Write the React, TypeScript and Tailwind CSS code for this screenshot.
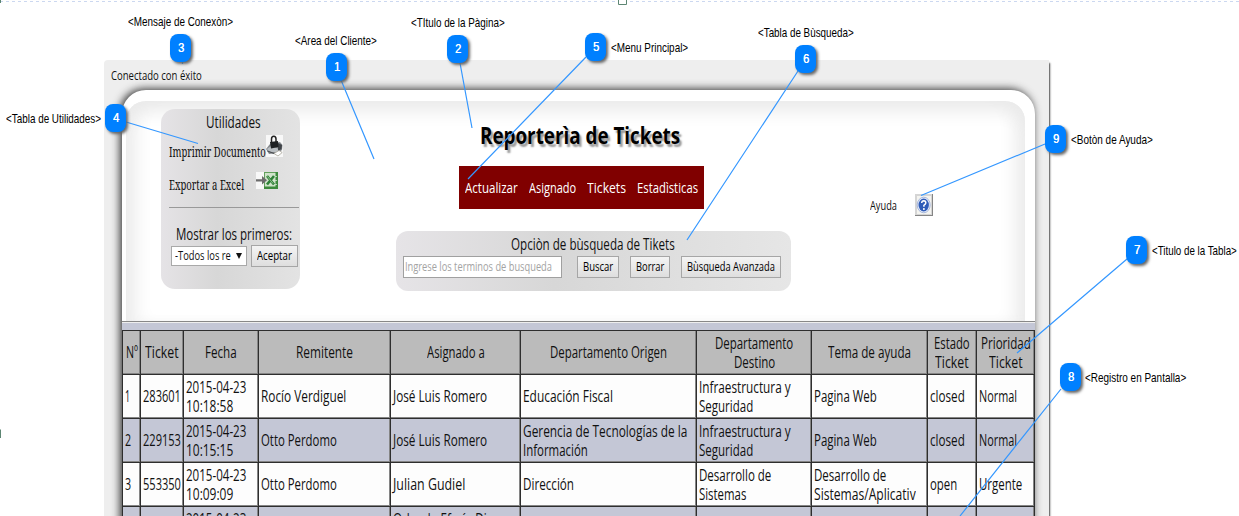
import { useLayoutEffect, useRef } from "react";

/* Single line of text condensed horizontally to a given width. */
function Fit({ w, children, className = "" }: { w: number; children: string; className?: string }) {
  const ref = useRef<HTMLSpanElement>(null);
  useLayoutEffect(() => {
    const el = ref.current;
    if (el) el.style.transform = `scaleX(${w / el.offsetWidth})`;
  }, [w, children]);
  return (
    <span className={"block shrink-0 whitespace-nowrap " + className} style={{ width: w }}>
      <span ref={ref} className="inline-block origin-left">{children}</span>
    </span>
  );
}

type Line = [string, number];

const badges: [number, string][] = [
  [1, "left-[326px] top-[53px]"],
  [2, "left-[447px] top-[35px]"],
  [3, "left-[170px] top-[34px]"],
  [4, "left-[105px] top-[104px]"],
  [5, "left-[585px] top-[33px]"],
  [6, "left-[795px] top-[45px]"],
  [7, "left-[1126px] top-[236px]"],
  [8, "left-[1060px] top-[363px]"],
  [9, "left-[1045px] top-[125px]"],
];

const labels: [string, number, string][] = [
  ["<Mensaje de Conexòn>", 105, "left-[128px] top-[13px]"],
  ["<Area del Cliente>", 82, "left-[295px] top-[32px]"],
  ["<TItulo de la Pàgina>", 94, "left-[411px] top-[14px]"],
  ["<Menu Principal>", 77, "left-[611px] top-[39px]"],
  ["<Tabla de Bùsqueda>", 96, "left-[758px] top-[24px]"],
  ["<Tabla de Utilidades>", 95, "left-[6px] top-[110px]"],
  ["<Botòn de Ayuda>", 82, "left-[1071px] top-[131px]"],
  ["<Titulo de la Tabla>", 85, "left-[1152px] top-[242px]"],
  ["<Registro en Pantalla>", 101, "left-[1085px] top-[369px]"],
];

const head: Line[][] = [
  [["Nº", 12]],
  [["Ticket", 34]],
  [["Fecha", 32]],
  [["Remitente", 57]],
  [["Asignado a", 58]],
  [["Departamento Origen", 117]],
  [["Departamento", 78], ["Destino", 41]],
  [["Tema de ayuda", 83]],
  [["Estado", 36], ["Ticket", 34]],
  [["Prioridad", 50], ["Ticket", 34]],
];

const infra: Line[] = [["Infraestructura y", 92], ["Seguridad", 54]];

const rows: Line[][][] = [
  [
    [["1", 5]], [["283601", 38]], [["2015-04-23", 60], ["10:18:58", 47]], [["Rocío Verdiguel", 85]],
    [["José Luis Romero", 94]], [["Educación Fiscal", 90]], infra, [["Pagina Web", 63]],
    [["closed", 35]], [["Normal", 38]],
  ],
  [
    [["2", 6]], [["229153", 38]], [["2015-04-23", 60], ["10:15:15", 47]], [["Otto Perdomo", 76]],
    [["José Luis Romero", 94]], [["Gerencia de Tecnologías de la", 164], ["Información", 65]], infra,
    [["Pagina Web", 63]], [["closed", 35]], [["Normal", 38]],
  ],
  [
    [["3", 6]], [["553350", 38]], [["2015-04-23", 60], ["10:09:09", 47]], [["Otto Perdomo", 76]],
    [["Julian Gudiel", 72]], [["Dirección", 51]], [["Desarrollo de", 72], ["Sistemas", 47]],
    [["Desarrollo de", 72], ["Sistemas/Aplicativ", 102]], [["open", 27]], [["Urgente", 43]],
  ],
  [
    [], [], [["2015-04-23", 60], ["\u00a0", 4]], [],
    [["Orlando Efraín Di", 94], ["\u00a0", 4]], [], [], [], [], [],
  ],
];

const cols = "grid grid-cols-[18px_43px_75px_132px_130px_176px_115px_116px_49px_58px]";

function Cell({ lines, center }: { lines: Line[]; center?: boolean }) {
  return (
    <div
      className={
        "flex flex-col justify-center overflow-hidden border-r border-b border-[#2e2e2e] pl-[2px] shadow-[inset_-1px_-1px_0_#858585] " +
        (center ? "items-center pr-[2px]" : "items-start")
      }
    >
      {lines.map(([t, w], i) => <Fit key={i} w={w} className="h-[19px] leading-[19px]">{t}</Fit>)}
    </div>
  );
}

function Button({ w, text, className }: { w: number; text: string; className: string }) {
  return (
    <button
      className={
        "flex h-[22px] shrink-0 items-center justify-center border border-[#a6a6a6] bg-gradient-to-b from-[#f4f4f4] to-[#dedede] text-[13px] text-black " +
        className
      }
    >
      <Fit w={w}>{text}</Fit>
    </button>
  );
}

function PrinterIcon() {
  return (
    <svg className="h-[22px] w-[17px] shrink-0" viewBox="0 0 17 22">
      <rect width="17" height="22" fill="#f8f8f8" />
      <path d="M0 14 L4 9 L14 7 L16.500 10 L16 15 L12 18 L3 19 Z" fill="#85898d" />
      <path d="M1 14 L5 11 L13 14 L11 17 L3 17 Z" fill="#b9bec2" />
      <path d="M12 8 L16 10 L15.500 14 L12 16 Z" fill="#3f4347" />
      <path d="M4 7 L12 6 L12.500 12 L5 13.500 Z" fill="#1e2022" />
      <path d="M5.500 7.500 V4 Q5.500 1.200 7.800 1.200 Q10 1.200 10 4 V7" fill="none" stroke="#222" strokeWidth="1.500" />
      <path d="M8 18.500 L13 15.500 L16.200 17.500 L12 21 Z" fill="#fff" stroke="#aaa69a" strokeWidth=".8" />
      <path d="M1.500 16 L8 18.500" stroke="#4a4d50" strokeWidth="1.200" />
    </svg>
  );
}

function ExcelIcon() {
  return (
    <svg className="h-[17px] w-[22px] shrink-0" viewBox="0 0 22 17">
      <rect width="22" height="17" fill="#f8f8f8" />
      <rect x="8.500" y=".5" width="12.500" height="15.500" fill="#cfe3ca" stroke="#63a05c" />
      <path d="M19.500 0 H22 V17 H8 V14.500 H19.500z" fill="#3c8a3c" />
      <path d="M17 4.500 h4 M17 8.500 h4 M17 12.500 h4" stroke="#dcebd8" strokeWidth=".7" />
      <path d="M11 4 L18 12.500 M18 4 L11 12.500" stroke="#2f8138" strokeWidth="2.600" />
      <path d="M11.500 4.500 L17 11.500" stroke="#b9dcb2" strokeWidth=".7" />
      <path d="M0 7.200 h6 V4 L11 8.300 L6 12.500 V9.500 H0z" fill="#6c6c6c" />
    </svg>
  );
}

function HelpIcon() {
  return (
    <svg className="h-[22px] w-[18px] shrink-0" viewBox="0 0 18 22">
      <rect width="18" height="22" fill="#858585" />
      <rect width="17" height="21" fill="#d5d5d5" />
      <rect x="2" y="2" width="14" height="18" fill="#f4f4f0" />
      <ellipse cx="8.700" cy="11" rx="6.500" ry="7.800" fill="#e8eefb" stroke="#97a9d6" strokeWidth=".8" />
      <ellipse cx="8.700" cy="11" rx="5.200" ry="6.500" fill="#2f5cb8" />
      <path d="M6.700 9 Q6.800 6.800 8.800 6.800 Q10.900 6.900 10.800 8.900 Q10.700 10.200 8.900 11.300 V12.700" fill="none" stroke="#fff" strokeWidth="1.500" />
      <circle cx="8.900" cy="14.900" r="1" fill="#fff" />
    </svg>
  );
}

export default function App() {
  return (
    <div className="relative h-[516px] w-[1239px] overflow-hidden bg-white pt-[60px] pl-[104px] font-['Open_Sans',sans-serif] text-[16px] text-[#111]">
      <main className="flex h-[480px] w-[945px] flex-col rounded-tl-[4px] bg-[#eee] pl-[18px] shadow-[2px_2px_2px_-1px_#444]">
        <div className="-ml-[11px] h-[30px] pt-[6px] text-[13px] leading-[19px]">
          <Fit w={91}>Conectado con éxito</Fit>
        </div>
        <section className="flex h-[440px] w-[913px] shrink-0 flex-col rounded-t-[24px] bg-white pt-[11px] shadow-[-2px_-1px_8px_0px_#333]">
          <div className="ml-[4px] flex h-[220px] w-[899px] shrink-0 items-start rounded-t-[20px] bg-white pl-[35px] shadow-[inset_0_16px_18px_-6px_#eaeaea,inset_18px_0_18px_-8px_#ededed,inset_-18px_0_18px_-8px_#ededed]">
            <aside className="mt-[8px] flex h-[180px] w-[139px] shrink-0 flex-col rounded-[14px] bg-gradient-to-r from-[#e5e3e6] via-[#d7d7d7] via-40% to-[#e3e3e3] pl-[8px]">
              <Fit w={55} className="mt-[3px] ml-[37px] h-[21px] leading-[21px]">Utilidades</Fit>
              <div className="mt-[2px] flex h-[22px] font-['Noto_Serif','Liberation_Serif',serif] text-[14px]">
                <Fit w={97} className="mt-[6px] leading-[22px]">Imprimir Documento</Fit>
                <PrinterIcon />
              </div>
              <div className="mt-[15px] flex h-[22px] font-['Noto_Serif','Liberation_Serif',serif] text-[14px]">
                <Fit w={75} className="mr-[12px] mt-[2px] leading-[22px]">Exportar a Excel</Fit>
                <ExcelIcon />
              </div>
              <hr className="mt-[13px] w-[130px] border-t border-[#999]" />
              <Fit w={116} className="mt-[16px] ml-[7px] h-[21px] leading-[21px]">Mostrar los primeros:</Fit>
              <div className="flex pl-[2px]">
                <div className="mt-[1px] flex h-[20px] w-[76px] items-center justify-between border border-[#a9a9a9] bg-white pr-[4px] pl-[3px] text-[13px]">
                  <Fit w={56}>-Todos los re</Fit>
                  <svg className="h-[6px] w-[6px]" viewBox="0 0 6 6"><path d="M0 0h6L3 6z" fill="#111" /></svg>
                </div>
                <Button w={35} text="Aceptar" className="ml-[4px] w-[47px]" />
              </div>
            </aside>

            <div className="ml-[96px] flex w-[395px] shrink-0 flex-col items-center">
              <h1 className="mt-[19px] -ml-[28px] text-[24px] leading-[30px] font-bold text-black [text-shadow:3px_3px_2px_#999]">
                <Fit w={200}>Reporterìa de Tickets</Fit>
              </h1>
              <nav className="mt-[16px] -ml-[25px] flex h-[43px] w-[245px] items-center gap-[11px] bg-[#800000] pl-[6px] text-[15px] font-medium text-white">
                <Fit w={53}>Actualizar</Fit>
                <Fit w={47}>Asignado</Fit>
                <Fit w={39}>Tickets</Fit>
                <Fit w={61}>Estadìsticas</Fit>
              </nav>
              <div className="mt-[22px] flex h-[60px] w-[395px] flex-col rounded-[12px] bg-gradient-to-r from-[#e6e4e7] via-[#d7d7d7] via-40% to-[#e6e6e6] pt-[2px]">
                <Fit w={164} className="ml-[115px] h-[22px] leading-[22px]">Opciòn de bùsqueda de Tikets</Fit>
                <div className="mt-[1px] flex pl-[7px]">
                  <div className="flex h-[22px] w-[159px] items-center border border-[#a0a0a0] bg-white pl-[1px] text-[13px] text-[#a3a3a3]">
                    <Fit w={147}>Ingrese los terminos de busqueda</Fit>
                  </div>
                  <Button w={30} text="Buscar" className="ml-[15px] w-[42px]" />
                  <Button w={28} text="Borrar" className="ml-[11px] w-[40px]" />
                  <Button w={88} text="Bùsqueda Avanzada" className="ml-[11px] w-[100px]" />
                </div>
              </div>
            </div>

            <div className="mt-[93px] ml-[79px] flex items-center gap-[18px] text-[13px]">
              <Fit w={27} className="mt-[2px]">Ayuda</Fit>
              <HelpIcon />
            </div>
          </div>
          <div className="h-[9px] w-[913px] shrink-0 border-t border-[#888] bg-[#c4c7d6] shadow-[inset_0_1px_0_#eee]" />
          <div className="w-[913px] shrink-0 border-t border-l border-[#2e2e2e]">
            <div className={cols + " h-[44px] bg-[#bbb]"}>
              {head.map((l, i) => <Cell key={i} lines={l} center />)}
            </div>
            {rows.map((r, i) => (
              <div key={i} className={cols + " h-[44px] " + (i % 2 ? "bg-[#c4c7d6]" : "bg-[#fdfdfd]")}>
                {r.map((l, j) => <Cell key={j} lines={l} />)}
              </div>
            ))}
          </div>
        </section>
      </main>

      <svg className="pointer-events-none absolute inset-0 h-full w-full" viewBox="0 0 1239 516">
        <path d="M0 1.500H1239" stroke="#ccd8f0" strokeDasharray="3 3" />
        <path d="M618.500 0V4.500H626.500V0" fill="#fff" stroke="#5d8673" />
        <path d="M0 0V3M0 429.500V438" stroke="#5d8673" strokeWidth="2" />
        <path
          d="M341 80L374 159M460 63L472 128M182.500 62V64M126 122L198 143.500M586 57L468 179M798 71L687 240M1127 259L1017 353M1061 389L960 516M1045 144L921 195.500"
          fill="none"
          stroke="#3497ff"
          strokeWidth="1.200"
        />
      </svg>
      {badges.map(([n, pos]) => (
        <div
          key={n}
          className={"absolute flex h-[28px] w-[21px] items-center justify-center rounded-[8px] bg-[#0080ff] font-['Liberation_Sans',sans-serif] text-[13px] text-white [text-shadow:0.4px_0_0_#fff] shadow-[2px_2px_3px_#666] " + pos}
        >
          <Fit w={6}>{String(n)}</Fit>
        </div>
      ))}
      {labels.map(([t, w, pos]) => (
        <div key={t} className={"absolute font-['Liberation_Sans',sans-serif] text-[13px] leading-[17px] text-black " + pos}>
          <Fit w={w}>{t}</Fit>
        </div>
      ))}
    </div>
  );
}
